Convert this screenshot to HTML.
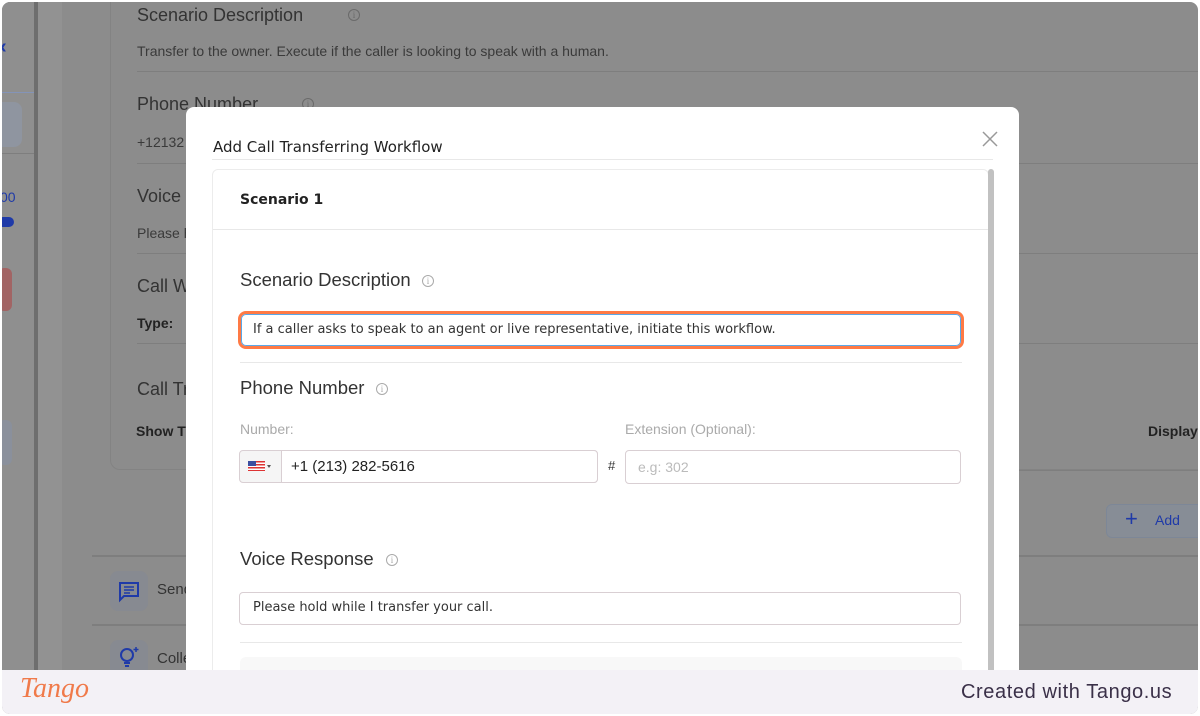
<!DOCTYPE html>
<html><head><meta charset="utf-8"><style>
*{box-sizing:border-box;margin:0;padding:0}
html,body{width:1200px;height:716px;overflow:hidden}
body{background:#fff;position:relative;font-family:"Liberation Sans",Arial,sans-serif}
.frame{position:absolute;left:2px;top:2px;width:1196px;height:712px;border-radius:8px;overflow:hidden;background:#8c8c8c}
.a{position:absolute;white-space:nowrap}
.bt{color:#333;font-size:18px}
.bs{color:#3a3a3a;font-size:14px}
.bl{position:absolute;height:1px;background:#7e7e7e}
.info{position:absolute;width:12px;height:12px;border:1px solid currentColor;border-radius:50%;font-size:9px;line-height:10px;text-align:center;font-family:"Liberation Serif",serif}
.modal{position:absolute;left:184px;top:105px;width:833px;height:563px;background:#fff;border-radius:8px 8px 0 0;overflow:hidden}
.in{position:absolute;border:1px solid #d9cfd3;border-radius:4px;background:#fff;font-size:14px;color:#333}
.mt{position:absolute;font-size:18.5px;color:#333;white-space:nowrap}
.ml{position:absolute;height:1px;background:#e8e8e8}
.footer{position:absolute;left:0;top:668px;width:1196px;height:44px;background:#f3f1f6}
</style></head><body>
<div class="frame">
  <div class="a" style="left:0;top:0;width:32px;height:668px;background:#8f8f8f"></div>
  <div class="a" style="left:32px;top:0;width:4px;height:668px;background:#6e6e6e"></div>
  <div class="a" style="left:36px;top:0;width:24px;height:668px;background:#929292"></div>
  <div class="a" style="left:-2px;top:34px;color:#1f3aa8;font-size:20px;font-weight:bold">‹</div>
  <div class="bl" style="left:0;top:90px;width:32px;background:#8494b8"></div>
  <div class="a" style="left:0;top:100px;width:20px;height:45px;background:#8f95a0;border-radius:0 8px 8px 0"></div>
  <div class="bl" style="left:0;top:151px;width:32px"></div>
  <div class="a" style="left:-2px;top:187px;color:#1f3aa8;font-size:14px">00</div>
  <div class="a" style="left:-4px;top:215px;width:16px;height:10px;background:#1f3aa8;border-radius:5px"></div>
  <div class="a" style="left:-4px;top:266px;width:14px;height:43px;background:#a26464;border-radius:6px"></div>
  <div class="a" style="left:-4px;top:418px;width:14px;height:45px;background:#8a909c;border-radius:6px"></div>
  <div class="a" style="left:108px;top:-10px;width:1100px;height:478px;border:1px solid #838383;border-radius:10px"></div>
  <div class="a bt" style="left:135px;top:3px">Scenario Description</div>
  <div class="info" style="left:346px;top:7px;color:#6a6a6a">i</div>
  <div class="a bs" style="left:135px;top:41px">Transfer to the owner. Execute if the caller is looking to speak with a human.</div>
  <div class="bl" style="left:135px;top:69px;width:1100px"></div>
  <div class="a bt" style="left:135px;top:92px">Phone Number</div>
  <div class="info" style="left:300px;top:96px;color:#6a6a6a">i</div>
  <div class="a bs" style="left:135px;top:132px">+12132</div>
  <div class="bl" style="left:135px;top:161px;width:1100px"></div>
  <div class="a bt" style="left:135px;top:184px">Voice</div>
  <div class="a bs" style="left:135px;top:223px">Please h</div>
  <div class="bl" style="left:135px;top:251px;width:1100px"></div>
  <div class="a bt" style="left:135px;top:274px">Call W</div>
  <div class="a bs" style="left:135px;top:313px;font-weight:bold;color:#222">Type:</div>
  <div class="bl" style="left:135px;top:341px;width:1100px"></div>
  <div class="a bt" style="left:135px;top:377px">Call Tr</div>
  <div class="a bs" style="left:134px;top:421px;font-weight:bold;color:#222">Show T</div>
  <div class="a bs" style="left:1146px;top:421px;font-weight:bold;color:#222">Display</div>
  <div class="bl" style="left:1016px;top:468px;width:200px"></div>
  <div class="a" style="left:1104px;top:502px;width:100px;height:34px;border:1px solid #7d8797;background:#878d96;border-radius:6px;color:#1f3aa8;font-size:14px;padding:7px 0 0 22px"><span style="font-size:22px;position:absolute;left:18px;top:1px">+</span><span style="margin-left:26px">Add</span></div>
  <div class="bl" style="left:90px;top:553px;width:1110px;height:2px"></div>
  <div class="a" style="left:108px;top:569px;width:38px;height:40px;background:#878a91;border-radius:8px"></div>
  <svg class="a" style="left:115px;top:578px" width="24" height="24" viewBox="0 0 24 24"><path d="M3 3h18v13H7l-4 4z" fill="none" stroke="#1f3aa8" stroke-width="2"/><path d="M7 7h10M7 10h10M7 13h6" stroke="#1f3aa8" stroke-width="1.6"/></svg>
  <div class="a bt" style="left:155px;top:579px;font-size:15px">Send</div>
  <div class="bl" style="left:90px;top:622px;width:1110px;height:2px"></div>
  <div class="a" style="left:108px;top:638px;width:38px;height:30px;background:#878a91;border-radius:8px 8px 0 0"></div>
  <svg class="a" style="left:115px;top:643px" width="26" height="25" viewBox="0 0 26 25"><circle cx="10" cy="10" r="6" fill="none" stroke="#1f3aa8" stroke-width="2"/><path d="M7 18h6M8 21h4" stroke="#1f3aa8" stroke-width="2"/><path d="M19 2v5M16.5 4.5h5" stroke="#1f3aa8" stroke-width="1.5"/></svg>
  <div class="a bt" style="left:155px;top:648px;font-size:15px">Colle</div>

  <div class="modal">
    <div class="a" style="left:27px;top:31px;color:#222;font-family:'DejaVu Sans',sans-serif;font-size:15px">Add Call Transferring Workflow</div>
    <svg class="a" style="left:796px;top:24px" width="16" height="16" viewBox="0 0 16 16"><path d="M1 1L15 15M15 1L1 15" stroke="#999" stroke-width="1.5"/></svg>
    <div class="ml" style="left:26px;top:52px;width:781px"></div>
    <div class="a" style="left:26px;top:62px;width:777px;height:560px;border:1px solid #ececec;border-radius:6px"></div>
    <div class="a" style="left:802px;top:62px;width:6px;height:520px;background:#c1c1c1;border-radius:3px"></div>
    <div class="a" style="left:54px;top:85px;font-weight:bold;color:#222;font-family:'DejaVu Sans',sans-serif;font-size:14px">Scenario 1</div>
    <div class="ml" style="left:27px;top:122px;width:775px"></div>
    <div class="mt" style="left:54px;top:162px">Scenario Description</div>
    <div class="info" style="left:236px;top:168px;color:#aaa">i</div>
    <div class="a" style="left:52px;top:204px;width:726px;height:38px;border:3px solid #ff7a45;border-radius:8px"></div>
    <div class="a" style="left:55px;top:207px;width:720px;height:32px;border:1px solid #5aa8e8;border-radius:5px;color:#333;padding:7px 0 0 11px;font-family:'DejaVu Sans',sans-serif;font-size:13px">If a caller asks to speak to an agent or live representative, initiate this workflow.</div>
    <div class="ml" style="left:54px;top:255px;width:722px"></div>
    <div class="mt" style="left:54px;top:270px">Phone Number</div>
    <div class="info" style="left:190px;top:276px;color:#aaa">i</div>
    <div class="a" style="left:54px;top:314px;font-size:14px;color:#aaa">Number:</div>
    <div class="in" style="left:53px;top:343px;width:359px;height:33px;background:#f5f5f5"></div>
    <div class="in" style="left:95px;top:343px;width:317px;height:33px;border-radius:0 4px 4px 0;padding:7px 0 0 9px;font-size:15px;color:#222">+1 (213) 282-5616</div>
    <svg class="a" style="left:62px;top:354px" width="24" height="10" viewBox="0 0 24 10"><rect width="17" height="10" fill="#d33"/><rect y="1.5" width="17" height="1.5" fill="#fff"/><rect y="4.5" width="17" height="1.5" fill="#fff"/><rect y="7.5" width="17" height="1.5" fill="#fff"/><rect width="8" height="5" fill="#3c4fa0"/><path d="M19 4h4l-2 3z" fill="#555"/></svg>
    <div class="a" style="left:422px;top:351px;font-size:13px;color:#333">#</div>
    <div class="a" style="left:439px;top:314px;font-size:14px;color:#aaa">Extension (Optional):</div>
    <div class="in" style="left:439px;top:343px;width:336px;height:34px;padding:8px 0 0 12px;color:#bbb">e.g: 302</div>
    <div class="mt" style="left:54px;top:441px">Voice Response</div>
    <div class="info" style="left:200px;top:447px;color:#aaa">i</div>
    <div class="in" style="left:53px;top:485px;width:722px;height:33px;padding:7px 0 0 13px;font-family:'DejaVu Sans',sans-serif;font-size:13px">Please hold while I transfer your call.</div>
    <div class="ml" style="left:54px;top:535px;width:722px"></div>
    <div class="a" style="left:54px;top:550px;width:722px;height:20px;background:#f8f8f8;border-radius:6px 6px 0 0"></div>
  </div>

  <div class="footer">
    <div class="a" style="left:18px;top:3px;font-family:'Liberation Serif',serif;font-style:italic;font-size:28px;color:#f07a4a">Tango</div>
    <div class="a" style="left:959px;top:11px;font-size:20px;letter-spacing:0.6px;color:#3a3048">Created with Tango.us</div>
  </div>
</div>
</body></html>
